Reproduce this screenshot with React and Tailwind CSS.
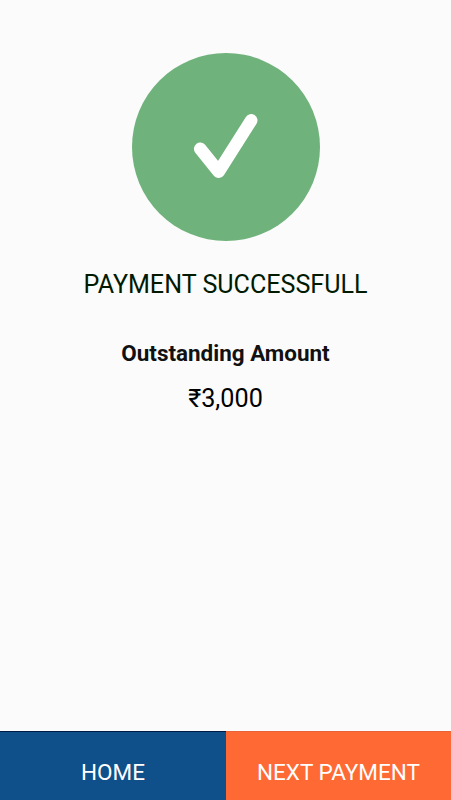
export default function App() {
  return (
    <main className="flex h-screen flex-col bg-[#fbfbfb] font-['Roboto',sans-serif] text-black">
      <section className="flex flex-1 flex-col items-center pt-[53px]">
        <svg className="ml-px h-[188px] w-[188px]" viewBox="0 0 188 188" fill="none" aria-label="Success">
          <circle cx="94" cy="94" r="94" fill="#70b27b" />
          <path d="M68.2 95.8 L86.7 118.7 L119.2 67.3" stroke="#fff" strokeWidth="12.6" strokeLinecap="round" strokeLinejoin="round" />
        </svg>
        <h1 className="mt-[29px] text-[25.1px] leading-[30px] text-[#001a00]">PAYMENT SUCCESSFULL</h1>
        <h2 className="mt-[38px] text-[22.45px] leading-[30px] font-bold text-[#111]">Outstanding Amount</h2>
        <p className="mt-[16px] text-[25.2px] leading-[30px]">₹3,000</p>
      </section>
      <footer className="flex h-[69px]">
        <button className="w-[226px] border-t border-[#001a44] bg-[#0f4f8a] pt-[13px] text-[22.5px] text-white">HOME</button>
        <button className="flex-1 border-t border-[#e86438] bg-[#ff6933] pt-[13px] text-[22.5px] text-white">NEXT PAYMENT</button>
      </footer>
    </main>
  );
}
